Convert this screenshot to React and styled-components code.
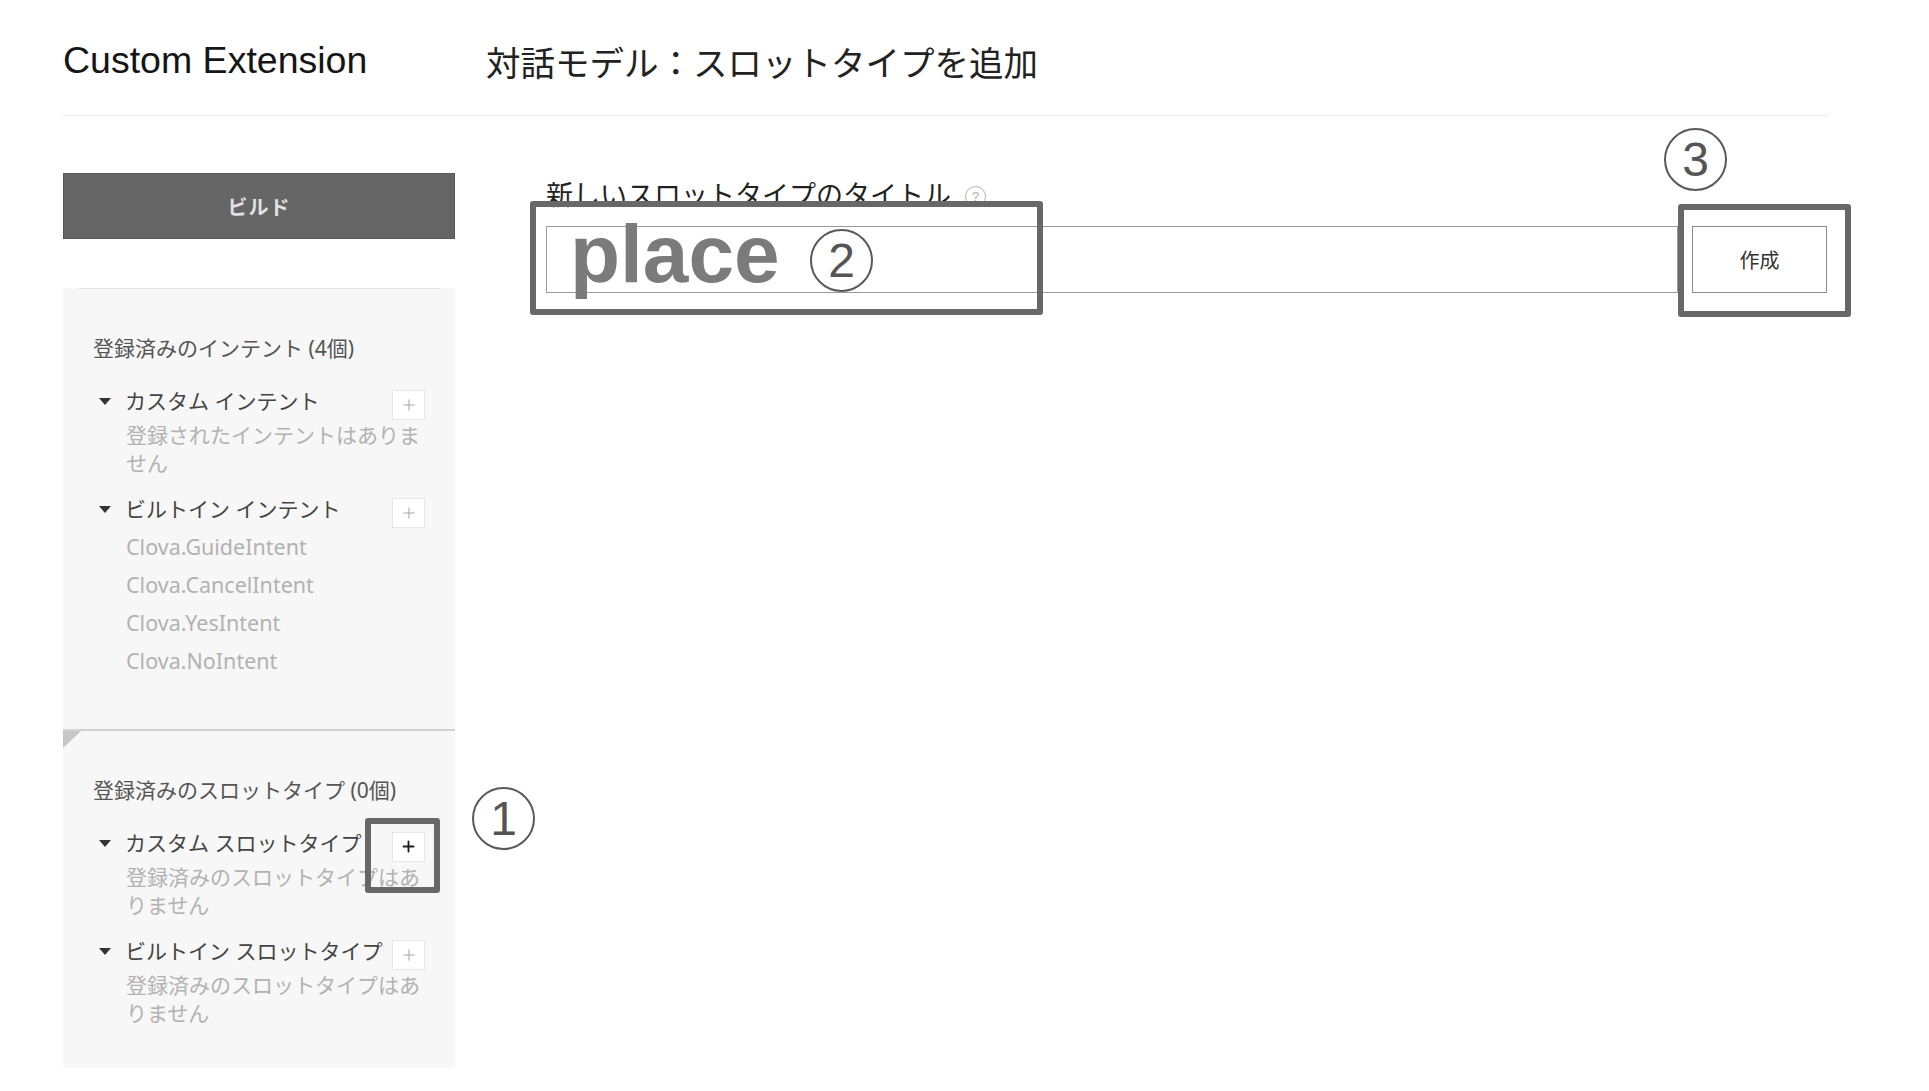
import React from 'react';
import styled, { createGlobalStyle } from 'styled-components';
import { Plus } from 'lucide-react';

const GlobalStyle = createGlobalStyle`
    body {
        margin: 0;
        background: #ffffff;
        font-family: "Noto Sans", "Noto Sans CJK JP", sans-serif;
        color: #333333;
    }
`;

const Page = styled.div`
    width: 1766px;
    margin-left: 63px;
`;

const Header = styled.header`
    display: flex;
    align-items: center;
    box-sizing: border-box;
    height: 116px;
    padding-top: 6px;
    border-bottom: 1px solid #eeeeee;
`;

const Brand = styled.div`
    width: 423px;
    font-family: "Liberation Sans", Arial, sans-serif;
    font-size: 37.5px;
    color: #151515;
`;

const PageTitle = styled.h1`
    margin: 0;
    font-family: "Noto Sans CJK JP", sans-serif;
    font-weight: 400;
    font-size: 34.5px;
    color: #222222;
`;

const Body = styled.div`
    display: flex;
    gap: 91px;
    padding-top: 57px;
`;

const Sidebar = styled.aside`
    width: 392px;
    flex-shrink: 0;
`;

const BuildButton = styled.button`
    display: flex;
    align-items: center;
    justify-content: center;
    width: 100%;
    height: 66px;
    box-sizing: border-box;
    background: #666666;
    border: 1px solid #585858;
    color: #e2e2e2;
    font-family: "Noto Sans CJK JP", sans-serif;
    font-size: 20px;
    font-weight: 700;
    letter-spacing: 1px;
`;

const Panel = styled.div`
    margin-top: 49px;
    background: #f7f7f7;
`;

const PanelRule = styled.div`
    height: 1px;
    margin: 0 15px;
    background: #e4e4e4;
`;

const Section = styled.section`
    padding: 45px 30px ${p => p.$bottom}px 30px;
`;

const SectionTitle = styled.h2`
    margin: 0 0 25px 0;
    font-size: 21px;
    font-weight: 400;
    line-height: 28px;
    color: #555555;
`;

const Group = styled.div`
    & + & {
        margin-top: 18px;
    }
`;

const GroupHead = styled.div`
    position: relative;
    display: flex;
    align-items: center;
    height: 28px;
`;

const Caret = styled.span`
    width: 0;
    height: 0;
    margin: 0 14px 0 6px;
    border-left: 6px solid transparent;
    border-right: 6px solid transparent;
    border-top: 7px solid #333333;
`;

const GroupLabel = styled.span`
    font-size: 21px;
    line-height: 28px;
    color: #444444;
    white-space: nowrap;
`;

const AddButton = styled.button`
    display: flex;
    align-items: center;
    justify-content: center;
    width: 33px;
    height: 30px;
    margin: 7px 0 0 auto;
    padding: 0;
    flex-shrink: 0;
    background: #ffffff;
    border: 1px solid #e6e6e6;
    color: ${p => (p.$active ? '#1e1e1e' : '#a8a8a8')};
`;

const Empty = styled.p`
    width: 300px;
    margin: 6px 0 0 33px;
    font-size: 21px;
    line-height: 28px;
    color: #b2b2b2;
`;

const ItemList = styled.ul`
    list-style: none;
    margin: 5px 0 0 33px;
    padding: 0;
`;

const Item = styled.li`
    font-size: 21.5px;
    line-height: 38px;
    color: #b2b2b2;
`;

const Divider = styled.div`
    position: relative;
    height: 0;
    border-top: 2px solid #d2d2d2;

    &::after {
        content: '';
        position: absolute;
        top: 0;
        left: 0;
        width: 0;
        height: 0;
        border-top: 17px solid #c6c6c6;
        border-right: 18px solid transparent;
    }
`;

const Main = styled.main`
    flex: 1;
    padding-top: 4px;
    padding-right: 2px;
`;

const LabelRow = styled.div`
    display: flex;
    align-items: center;
    gap: 14px;
`;

const FieldLabel = styled.label`
    font-family: "Noto Sans CJK JP", sans-serif;
    font-size: 27px;
    line-height: 34px;
    color: #222222;
`;

const HelpIcon = styled.span`
    display: flex;
    align-items: center;
    justify-content: center;
    width: 19px;
    height: 19px;
    margin-top: 4px;
    border: 1.5px solid #b0b0b0;
    border-radius: 50%;
    font-family: "Liberation Sans", Arial, sans-serif;
    font-size: 13px;
    color: #b0b0b0;
`;

const InputRow = styled.div`
    display: flex;
    gap: 14px;
    margin-top: 15px;
`;

const FieldWrap = styled.div`
    position: relative;
    flex: 1;
`;

const Field = styled.input`
    display: block;
    width: 100%;
    height: 67px;
    box-sizing: border-box;
    border: 1px solid #9a9a9a;
    background: #ffffff;
    outline: none;
`;

const PlaceText = styled.span`
    position: absolute;
    left: 24px;
    top: -13px;
    font-family: "Liberation Sans", Arial, sans-serif;
    font-weight: 700;
    font-size: 82px;
    line-height: 82px;
    color: #7b7b7b;
`;

const ButtonWrap = styled.div`
    position: relative;
`;

const CreateButton = styled.button`
    display: flex;
    align-items: center;
    justify-content: center;
    width: 135px;
    height: 67px;
    box-sizing: border-box;
    background: #ffffff;
    border: 1px solid #8a8a8a;
    font-family: "Noto Sans CJK JP", sans-serif;
    font-size: 20px;
    color: #333333;
`;

const Callout = styled.div`
    position: absolute;
    left: ${p => p.$x}px;
    top: ${p => p.$y}px;
    width: ${p => p.$w}px;
    height: ${p => p.$h}px;
    box-sizing: border-box;
    border: 6px solid #686868;
    border-radius: 3px;
    pointer-events: none;
`;

const CircleNum = styled.span`
    position: absolute;
    left: ${p => p.$x}px;
    top: ${p => p.$y}px;
    display: flex;
    align-items: center;
    justify-content: center;
    width: 63px;
    height: 63px;
    box-sizing: border-box;
    border: 2px solid #5a5a5a;
    border-radius: 50%;
    font-family: "Liberation Sans", Arial, sans-serif;
    font-size: 48px;
    font-weight: 400;
    color: #555555;
`;

const BUILTIN_INTENTS = [
    'Clova.GuideIntent',
    'Clova.CancelIntent',
    'Clova.YesIntent',
    'Clova.NoIntent',
];

const App = () => {
  return (
    <Page>
        <GlobalStyle />
        <Header>
            <Brand>Custom Extension</Brand>
            <PageTitle>対話モデル：スロットタイプを追加</PageTitle>
        </Header>
        <Body>
            <Sidebar>
                <BuildButton>ビルド</BuildButton>
                <Panel>
                    <PanelRule />
                    <Section $bottom={49}>
                        <SectionTitle>登録済みのインテント (4個)</SectionTitle>
                        <Group>
                            <GroupHead>
                                <Caret />
                                <GroupLabel>カスタム インテント</GroupLabel>
                                <AddButton><Plus size={18} strokeWidth={1.4} /></AddButton>
                            </GroupHead>
                            <Empty>登録されたインテントはありません</Empty>
                        </Group>
                        <Group>
                            <GroupHead>
                                <Caret />
                                <GroupLabel>ビルトイン インテント</GroupLabel>
                                <AddButton><Plus size={18} strokeWidth={1.4} /></AddButton>
                            </GroupHead>
                            <ItemList>
                                {BUILTIN_INTENTS.map(name => (
                                    <Item key={name}>{name}</Item>
                                ))}
                            </ItemList>
                        </Group>
                    </Section>
                    <Divider />
                    <Section $bottom={41}>
                        <SectionTitle>登録済みのスロットタイプ (0個)</SectionTitle>
                        <Group>
                            <GroupHead>
                                <Caret />
                                <GroupLabel>カスタム スロットタイプ</GroupLabel>
                                <AddButton $active><Plus size={17} strokeWidth={2.6} /></AddButton>
                                <Callout $x={272} $y={-11} $w={75} $h={75} />
                                <CircleNum $x={379} $y={-42}>1</CircleNum>
                            </GroupHead>
                            <Empty>登録済みのスロットタイプはありません</Empty>
                        </Group>
                        <Group>
                            <GroupHead>
                                <Caret />
                                <GroupLabel>ビルトイン スロットタイプ</GroupLabel>
                                <AddButton><Plus size={18} strokeWidth={1.4} /></AddButton>
                            </GroupHead>
                            <Empty>登録済みのスロットタイプはありません</Empty>
                        </Group>
                    </Section>
                </Panel>
            </Sidebar>
            <Main>
                <LabelRow>
                    <FieldLabel>新しいスロットタイプのタイトル</FieldLabel>
                    <HelpIcon>?</HelpIcon>
                </LabelRow>
                <InputRow>
                    <FieldWrap>
                        <Field type="text" readOnly />
                        <PlaceText>place</PlaceText>
                        <CircleNum $x={264} $y={3}>2</CircleNum>
                        <Callout $x={-16} $y={-25} $w={513} $h={114} />
                    </FieldWrap>
                    <ButtonWrap>
                        <CreateButton>作成</CreateButton>
                        <CircleNum $x={-28} $y={-98}>3</CircleNum>
                        <Callout $x={-14} $y={-22} $w={173} $h={113} />
                    </ButtonWrap>
                </InputRow>
            </Main>
        </Body>
    </Page>
  )
}

export default App
